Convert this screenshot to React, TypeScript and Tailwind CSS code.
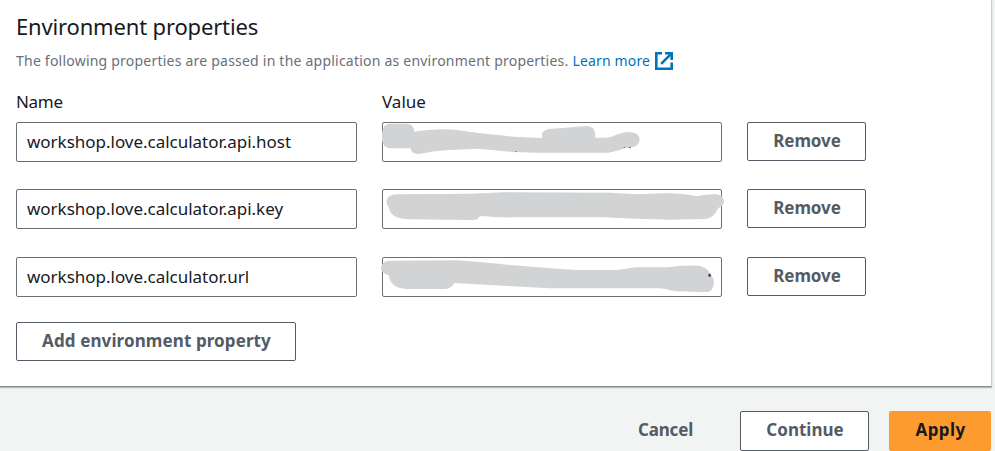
type Property = {
  name: string;
  shape: string;
  offset: string;
  gap: string;
  specks: { x: number; y: number; w: number; h: number; fill: string }[];
};

const properties: Property[] = [
  {
    name: 'workshop.love.calculator.api.host',
    offset: '-top-3',
    gap: '',
    shape:
      'M60 41H112Q131 43 133 65C170 59 215 55 255 59L330 70L430 80L516 84C514 68 520 59 540 57L650 48Q675 50 675 70L676 83H710C735 80 745 67 775 66Q808 67 809 88Q808 109 785 112C760 113 745 125 715 128H500L430 126L325 116L240 120C200 122 175 127 145 132Q125 133 121 115H60Q38 112 36 90V70Q38 42 60 41Z',
    specks: [
      { x: 435, y: 123, w: 5, h: 3, fill: '#8a8a8a' },
      { x: 761, y: 111, w: 4, h: 3, fill: '#777777' },
      { x: 777, y: 111, w: 5, h: 3, fill: '#444444' },
    ],
  },
  {
    name: 'workshop.love.calculator.api.key',
    offset: '-top-[9px]',
    gap: 'mt-[27px]',
    shape:
      'M80 43L300 41L400 37L720 38L800 43L880 40Q930 38 980 48C1010 45 1020 42 1040 43Q1062 48 1062 66Q1060 80 1045 84C1035 100 1030 116 1000 117L900 119L800 116L700 112H430C390 113 365 111 335 108Q325 110 322 117Q318 120 300 120L120 118C75 117 60 105 57 82Q48 75 50 60Q55 44 80 43Z',
    specks: [],
  },
  {
    name: 'workshop.love.calculator.url',
    offset: '-top-[9px]',
    gap: 'mt-[28px]',
    shape:
      'M60 38L260 37L330 42L430 52L540 61L620 66H740L800 58H890C920 54 950 51 985 53C1015 58 1020 75 1030 92Q1036 110 1025 125Q1020 133 1000 132L920 130C890 126 885 121 860 121L540 121L400 113L252 105Q245 122 225 123H110C80 122 60 110 56 82Q34 75 32 60Q36 38 60 38Z',
    specks: [
      { x: 1013, y: 78, w: 3, h: 6, fill: '#e0a878' },
      { x: 1016, y: 78, w: 6, h: 8, fill: '#14305c' },
    ],
  },
];

const buttonBase =
  'flex items-center justify-center rounded-[2px] border border-[#545b64] bg-white text-[17px] font-bold text-[#545b64]';

function PropertyRow({ property }: { property: Property }) {
  return (
    <div className={`flex items-start ${property.gap}`}>
      <div className="flex h-10 w-[341px] items-center rounded-[2px] border border-[#687078] px-2.5 text-[17px] leading-6 tracking-[-0.02px] text-[#16191f]">
        {property.name}
      </div>
      <div className="relative ml-[25px] h-10 w-[340px]">
        <div className="h-full w-full rounded-[2px] border border-[#687078]" />
        <svg
          className={`absolute -left-3 h-[60px] w-[370px] ${property.offset}`}
          viewBox="0 0 1110 180"
        >
          <path d={property.shape} fill="#d1d3d4" />
          {property.specks.map((s) => (
            <rect key={s.x} x={s.x} y={s.y} width={s.w} height={s.h} fill={s.fill} />
          ))}
        </svg>
      </div>
      <button className={`${buttonBase} ml-[25px] h-[39px] w-[119px] pb-0.5 pl-px tracking-[-0.1px]`}>
        Remove
      </button>
    </div>
  );
}

function ExternalIcon() {
  return (
    <svg className="ml-[5px] h-[18px] w-[18px]" viewBox="0 0 18 18" fill="none" stroke="#0073bb" strokeWidth="2.6">
      <path d="M7 1.3H1.3V16.7H16.7V10.5" />
      <path d="M10 1.3H16.7V8" />
      <path d="M16.3 1.7L6.2 11.8" />
    </svg>
  );
}

export default function App() {
  return (
    <div className="h-[451px] w-[995px] overflow-hidden bg-[#f2f3f3] font-['Noto_Sans','Open_Sans',sans-serif] text-[#16191f]">
      <section className="h-[387px] w-[992px] border-r border-b border-r-[#c9cccc] border-b-[#879090] bg-white pt-2.5 pl-4 shadow-[0_1px_1px_0_rgba(0,28,36,0.25)]">
        <h2 className="text-[22px] leading-[33px] tracking-[-0.16px]">Environment properties</h2>
        <p className="mt-[7px] flex items-center text-[14px] leading-[21px] text-[#687078]">
          <span className="tracking-[0.22px]">
            The following properties are passed in the application as environment properties.
          </span>
          <a className="ml-[4px] flex items-center tracking-[0.15px] text-[#0073bb]">
            Learn more
            <ExternalIcon />
          </a>
        </p>
        <div className="mt-[21px] mb-2.5 flex text-[17px] leading-5">
          <div className="w-[366px] tracking-[-0.3px]">Name</div>
          <div>Value</div>
        </div>
        {properties.map((p) => (
          <PropertyRow key={p.name} property={p} />
        ))}
        <button className={`${buttonBase} mt-[25px] h-[39px] w-[280px] pb-0.5 pl-px tracking-[0.1px]`}>
          Add environment property
        </button>
      </section>
      <footer className="mt-6 flex h-10 items-center pr-1 text-[17px] font-bold text-[#545b64]">
        <button className="mr-[47px] ml-auto pb-0.5 tracking-[-0.2px]">Cancel</button>
        <button className={`${buttonBase} h-10 w-[129px] pb-0.5 pl-px`}>Continue</button>
        <button className="ml-5 h-10 w-[102px] rounded-[2px] bg-[#ff9b2e] pb-0.5 pl-px tracking-[0.4px] text-[#16191f]">
          Apply
        </button>
      </footer>
    </div>
  );
}
